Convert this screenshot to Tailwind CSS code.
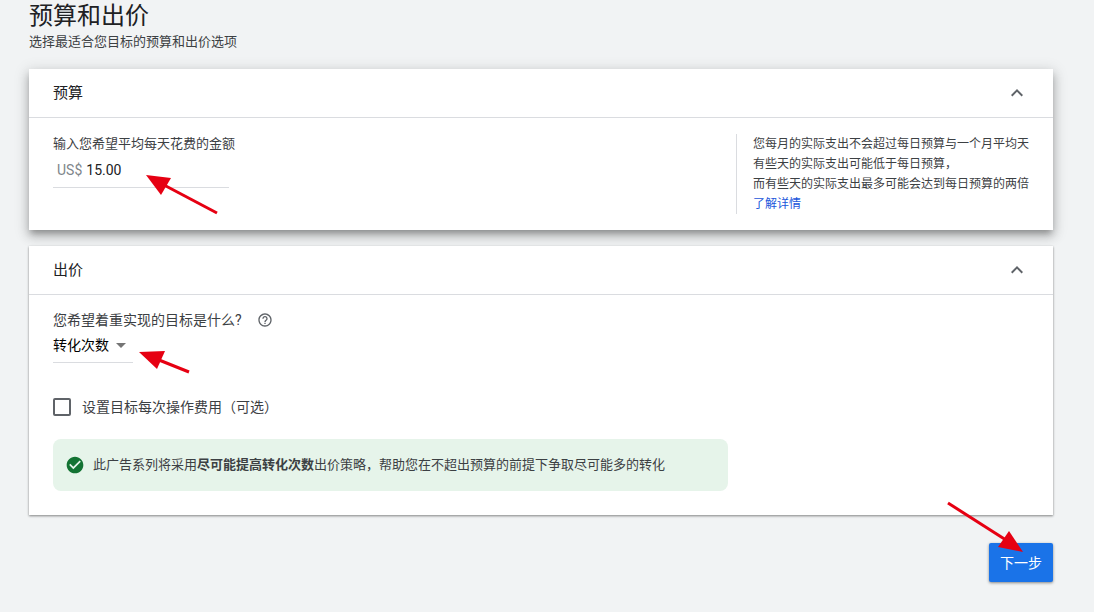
<!DOCTYPE html>
<html lang="zh-CN">
<head>
<meta charset="utf-8">
<meta name="viewport" content="width=device-width, initial-scale=1">
<title>预算和出价</title>
<script src="https://cdn.jsdelivr.net/npm/@tailwindcss/browser@4"></script>
</head>
<body class="min-h-screen bg-[#f1f3f4] font-[Roboto,'Noto_Sans_CJK_SC',sans-serif] text-[#3c4043]">
<main class="pr-[41px] pb-[30px] pl-[29px]">
  <header class="mb-4">
    <h1 class="text-2xl leading-8 font-normal text-[#202124]">预算和出价</h1>
    <p class="text-[13px] leading-5">选择最适合您目标的预算和出价选项</p>
  </header>

  <section aria-labelledby="budget-title" class="mt-[17px] bg-white shadow-[0_5px_6px_-2px_rgba(0,0,0,0.25),0_6px_10px_1px_rgba(0,0,0,0.15),0_3px_14px_2px_rgba(0,0,0,0.12)]">
    <div class="flex h-[49px] items-center justify-between border-b border-[#dadce0] px-6">
      <h2 id="budget-title" class="text-[15px] leading-6 text-[#202124]">预算</h2>
      <button type="button" aria-label="收起预算" aria-expanded="true" class="text-[#5f6368]">
        <svg class="size-6" viewBox="0 0 24 24" fill="currentColor"><path d="M12 8l-6 6 1.41 1.41L12 10.83l4.59 4.58L18 14z"/></svg>
      </button>
    </div>
    <div class="flex justify-between gap-6 px-6 py-4">
      <div class="relative">
        <label for="amount" class="block text-[13px] leading-5">输入您希望平均每天花费的金额</label>
        <div class="flex h-[34px] w-44 items-center border-b border-[#dadce0] px-1 pb-0.5 text-sm">
          <span class="mr-1 text-[#80868b]">US$</span>
          <input id="amount" type="text" inputmode="decimal" value="15.00" class="min-w-0 flex-1 bg-transparent text-[#202124] outline-none">
        </div>
        <svg class="pointer-events-none absolute top-[41px] left-[93px] h-10 w-[74px]" viewBox="0 0 74 40" aria-hidden="true"><path d="M18 10L71 38" stroke="#e60012" stroke-width="3"/><path d="M0 0L25 3L15 20z" fill="#e60012"/></svg>
      </div>
      <div class="h-20 w-[293px] overflow-hidden border-l border-[#dadce0] pl-4 text-xs leading-5 whitespace-nowrap">
        <p>您每月的实际支出不会超过每日预算与一个月平均天</p>
        <p>有些天的实际支出可能低于每日预算，</p>
        <p>而有些天的实际支出最多可能会达到每日预算的两倍</p>
        <a href="#" class="text-[#1a56db]">了解详情</a>
      </div>
    </div>
  </section>

  <section aria-labelledby="bid-title" class="relative mt-4 bg-white shadow-[0_1px_2px_rgba(0,0,0,0.35),0_1px_3px_rgba(0,0,0,0.15)]">
    <div class="flex h-[49px] items-center justify-between border-b border-[#dadce0] px-6">
      <h2 id="bid-title" class="text-[15px] leading-6 text-[#202124]">出价</h2>
      <button type="button" aria-label="收起出价" aria-expanded="true" class="text-[#5f6368]">
        <svg class="size-6" viewBox="0 0 24 24" fill="currentColor"><path d="M12 8l-6 6 1.41 1.41L12 10.83l4.59 4.58L18 14z"/></svg>
      </button>
    </div>
    <div class="px-6 pt-[15px] pb-6">
      <div class="flex items-center gap-[15px]">
        <label for="goal" class="text-sm leading-5">您希望着重实现的目标是什么?</label>
        <button type="button" aria-label="帮助" class="text-[#5f6368]">
          <svg class="size-4" viewBox="0 0 24 24" fill="currentColor"><path d="M11 18h2v-2h-2v2zm1-16C6.48 2 2 6.48 2 12s4.480 10 10 10 10-4.480 10-10S17.520 2 12 2zm0 18c-4.410 0-8-3.590-8-8s3.590-8 8-8 8 3.590 8 8-3.590 8-8 8zm0-14c-2.210 0-4 1.790-4 4h2c0-1.100.9-2 2-2s2 .9 2 2c0 2-3 1.750-3 5h2c0-2.250 3-2.500 3-5 0-2.210-1.790-4-4-4z"/></svg>
        </button>
      </div>
      <div class="relative mt-px h-8 w-20 border-b border-[#dadce0]">
        <select id="goal" class="block h-7 w-full appearance-none bg-transparent text-sm text-black outline-none"><option>转化次数</option></select>
        <svg class="pointer-events-none absolute top-3 right-[7px] h-[5px] w-[10px]" viewBox="0 0 10 5" aria-hidden="true"><path d="M0 0h10L5 5z" fill="#757575"/></svg>
        <svg class="pointer-events-none absolute top-5 left-[86px] h-6 w-[52px]" viewBox="0 0 52 24" aria-hidden="true"><path d="M20 9L50 21" stroke="#e60012" stroke-width="3"/><path d="M0 1L26 0L18 18z" fill="#e60012"/></svg>
      </div>
      <label class="mt-[34px] flex items-center gap-[11px] text-sm leading-5">
        <input type="checkbox" class="size-[18px] appearance-none rounded-[2px] border-2 border-[#5f6368] checked:bg-[#1a73e8]">
        <span>设置目标每次操作费用（可选）</span>
      </label>
      <div class="mt-[22px] flex w-[675px] max-w-full items-center gap-2 rounded-lg bg-[#e6f4ea] px-3 py-4 text-[13px] leading-5">
        <svg class="size-5 shrink-0" viewBox="0 0 24 24" fill="#137333" aria-hidden="true"><path d="M12 2C6.480 2 2 6.480 2 12s4.480 10 10 10 10-4.480 10-10S17.520 2 12 2zm-2 15l-5-5 1.410-1.410L10 14.170l7.590-7.590L19 8l-9 9z"/></svg>
        <p>此广告系列将采用<strong class="font-bold">尽可能提高转化次数</strong>出价策略，帮助您在不超出预算的前提下争取尽可能多的转化</p>
      </div>
    </div>
  </section>

  <div class="mt-7 flex justify-end">
    <div class="relative">
      <button type="button" class="block h-[39px] w-16 rounded-[2px] bg-[#1a73e8] text-sm text-white shadow-[0_1px_3px_rgba(0,0,0,0.45)]">下一步</button>
      <svg class="pointer-events-none absolute -top-[42px] -left-[43px] h-[52px] w-[78px]" viewBox="0 0 78 52" aria-hidden="true"><path d="M2 2L60 39" stroke="#e60012" stroke-width="3"/><path d="M77 51L63 30L52 46z" fill="#e60012"/></svg>
    </div>
  </div>
</main>
</body>
</html>
